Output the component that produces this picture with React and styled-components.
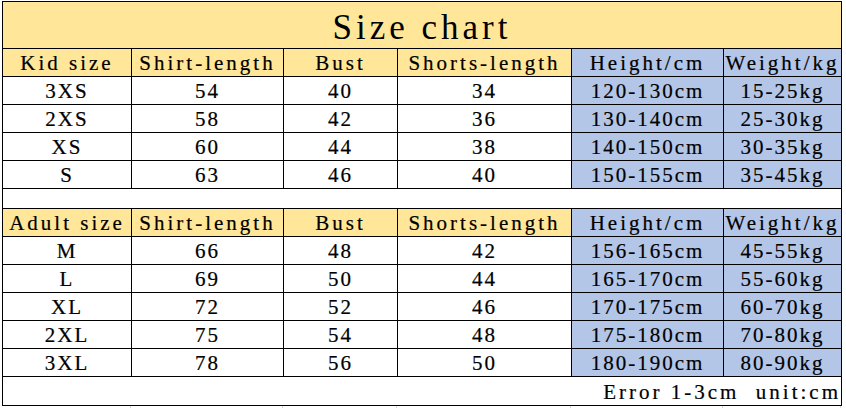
import React from "react";
import styled, { createGlobalStyle } from "styled-components";

const Global = createGlobalStyle`
  html, body { margin: 0; padding: 0; background: #fff; }
  body { font-family: "Liberation Serif", "Times New Roman", serif; }
`;

const YELLOW = "#FFE699";
const BLUE = "#B4C6E7";
const COLS = "129px 152px 114px 174px 152px 118px";

const Sheet = styled.div`
  margin: 1px 0 0 2px;
  width: 839px;
  border-top: 1px solid #000;
  border-left: 1px solid #000;
  display: grid;
  grid-template-columns: ${COLS};
  color: #000;
`;

const Cell = styled.div`
  box-sizing: border-box;
  height: ${(p) => p.$h || 28}px;
  grid-column: span ${(p) => p.$span || 1};
  background: ${(p) => p.$bg || "#fff"};
  border-right: 1px solid #000;
  border-bottom: 1px solid #000;
  display: flex;
  align-items: center;
  justify-content: ${(p) => (p.$align === "right" ? "flex-end" : "center")};
  padding-top: ${(p) => p.$pt ?? 2}px;
  font-family: "Liberation Serif", "Times New Roman", serif;
  font-size: ${(p) => p.$size || 21}px;
  letter-spacing: ${(p) => p.$ls ?? 2}px;
  white-space: pre;
  line-height: 1;
  -webkit-text-stroke: ${(p) => p.$stroke ?? 0.2}px #000;
`;

const Below = styled.div`
  margin-left: 2px;
  width: 839px;
  height: 3px;
  display: grid;
  grid-template-columns: ${COLS};
`;

const GridLine = styled.div`
  border-right: 1px solid #d9d9d9;
`;

const kid = [
  ["3XS", "54", "40", "34", "120-130cm", "15-25kg"],
  ["2XS", "58", "42", "36", "130-140cm", "25-30kg"],
  ["XS", "60", "44", "38", "140-150cm", "30-35kg"],
  ["S", "63", "46", "40", "150-155cm", "35-45kg"],
];

const adult = [
  ["M", "66", "48", "42", "156-165cm", "45-55kg"],
  ["L", "69", "50", "44", "165-170cm", "55-60kg"],
  ["XL", "72", "52", "46", "170-175cm", "60-70kg"],
  ["2XL", "75", "54", "48", "175-180cm", "70-80kg"],
  ["3XL", "78", "56", "50", "180-190cm", "80-90kg"],
];

const HeaderRow = ({ first }) =>
  [first, "Shirt-length", "Bust", "Shorts-length", "Height/cm", "Weight/kg"].map((t, i) => (
    <Cell key={first + i} $bg={i >= 4 ? BLUE : YELLOW} $ls={3}>
      {t}
    </Cell>
  ));

const DataRows = ({ rows }) =>
  rows.map((r) =>
    r.map((t, i) => (
      <Cell key={r[0] + i} $bg={i >= 4 ? BLUE : "#fff"}>
        {t}
      </Cell>
    ))
  );

export default function App() {
  return (
    <>
      <Global />
      <Sheet>
        <Cell $span={6} $h={47} $bg={YELLOW} $size={35} $ls={4} $pt={4} $stroke={0}>
          Size chart
        </Cell>
        <HeaderRow first="Kid size" />
        <DataRows rows={kid} />
        <Cell $span={6} $h={20} />
        <HeaderRow first="Adult size" />
        <DataRows rows={adult} />
        <Cell $span={6} $h={29} $align="right" $ls={3}>
          {"Error 1-3cm  unit:cm"}
        </Cell>
      </Sheet>
      <Below>
        {[0, 1, 2, 3, 4, 5].map((i) => (
          <GridLine key={i} />
        ))}
      </Below>
    </>
  );
}
